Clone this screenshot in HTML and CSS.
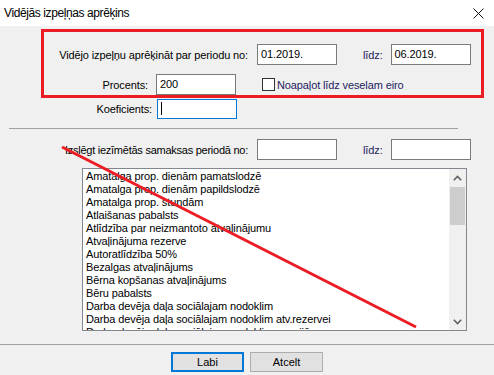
FILE: index.html
```html
<!DOCTYPE html>
<html lang="lv">
<head>
    <meta charset="UTF-8">
    <title>Vidējās izpeļņas aprēķins</title>
    <link rel="stylesheet" href="styles.css">
</head>
<body>
<div class="window">
    <div class="titlebar">
        <span class="title">Vidējās izpeļņas aprēķins</span>
        <svg class="close" width="11" height="11" viewBox="0 0 11 11">
            <path d="M0.5 0.5 L10.5 10.5 M10.5 0.5 L0.5 10.5" stroke="#111" stroke-width="1" fill="none"/>
        </svg>
    </div>

    <div class="content">
        <div class="row row-period">
            <span class="label label-wide">Vidējo izpeļņu aprēķināt par periodu no:</span>
            <div class="field">01.2019.</div>
            <span class="label label-until navy">līdz:</span>
            <div class="field">06.2019.</div>
        </div>

        <div class="row row-percent">
            <span class="label label-percent">Procents:</span>
            <div class="field">200</div>
            <span class="checkbox"></span>
            <span class="label navy">Noapaļot līdz veselam eiro</span>
        </div>

        <div class="row row-coef">
            <span class="label label-coef">Koeficients:</span>
            <div class="field field-focus"><span class="caret"></span></div>
        </div>

        <div class="divider"></div>

        <div class="row row-exclude">
            <span class="label label-wide label-tight">Izslēgt iezīmētās samaksas periodā no:</span>
            <div class="field"></div>
            <span class="label label-until navy">līdz:</span>
            <div class="field"></div>
        </div>

        <div class="listbox">
            <div class="items">
                <div>Amatalga prop. dienām pamatslodzē</div>
                <div>Amatalga prop. dienām papildslodzē</div>
                <div>Amatalga prop. stundām</div>
                <div>Atlaišanas pabalsts</div>
                <div>Atlīdzība par neizmantoto atvaļinājumu</div>
                <div>Atvaļinājuma rezerve</div>
                <div>Autoratlīdzība 50%</div>
                <div>Bezalgas atvaļinājums</div>
                <div>Bērna kopšanas atvaļinājums</div>
                <div>Bēru pabalsts</div>
                <div>Darba devēja daļa sociālajam nodoklim</div>
                <div>Darba devēja daļa sociālajam nodoklim atv.rezervei</div>
                <div>Darba devēja daļa sociālajam nodoklim pensijām</div>
            </div>
            <div class="scrollbar">
                <div class="arrow">
                    <svg width="9" height="6" viewBox="0 0 9 6"><path d="M0.8 5.2 L4.5 1.5 L8.2 5.2" stroke="#606060" stroke-width="1.6" fill="none"/></svg>
                </div>
                <div class="thumb"></div>
                <div class="track"></div>
                <div class="arrow">
                    <svg width="9" height="6" viewBox="0 0 9 6"><path d="M0.8 0.8 L4.5 4.5 L8.2 0.8" stroke="#606060" stroke-width="1.6" fill="none"/></svg>
                </div>
            </div>
        </div>
    </div>

    <div class="footer">
        <button class="btn btn-default">Labi</button>
        <button class="btn">Atcelt</button>
    </div>

    <!-- red annotation drawn over the dialog -->
    <svg class="markup" width="494" height="375" viewBox="0 0 494 375">
        <rect x="42.5" y="30.5" width="440" height="66" fill="none" stroke="#ec1c24" stroke-width="3"/>
        <line x1="62" y1="147" x2="416" y2="327" stroke="#ec1c24" stroke-width="3"/>
    </svg>
</div>
</body>
</html>
```

FILE: styles.css
```css
body {
    margin: 0;
    background: #f0f0f0;
    font-family: 'Liberation Sans', Arial, sans-serif;
    font-size: 11px;
    letter-spacing: -0.12px;
    color: #000;
    overflow: hidden;
}
.window {
    position: relative;
    width: 494px;
    height: 375px;
    background: #f0f0f0;
}
.titlebar {
    height: 26px;
    background: #fff;
    display: flex;
    align-items: center;
    justify-content: space-between;
    padding: 0 10px 0 4px;
}
.title {
    font-size: 12px;
    letter-spacing: -0.4px;
    color: #000;
    margin-top: -1px;
}
.close {
    margin-top: 1px;
}
.content {
    padding-top: 18px;
}
.row {
    display: flex;
    align-items: center;
    height: 21px;
}
.row-percent {
    margin-top: 9px;
}
.row-coef {
    margin-top: 3px;
}
.row-exclude {
    margin-top: 10px;
}
.label {
    white-space: nowrap;
}
.navy {
    color: #1c1c5e;
}
.label-wide {
    width: 248px;
    text-align: right;
    margin-right: 9px;
}
.label-tight {
    letter-spacing: -0.25px;
}
.label-until {
    margin-left: 26px;
    margin-right: 8px;
}
.label-percent {
    width: 148px;
    text-align: right;
    margin-right: 8px;
}
.label-coef {
    width: 152px;
    text-align: right;
    margin-right: 5px;
}
.field {
    box-sizing: border-box;
    width: 80px;
    height: 21px;
    background: #fff;
    border: 1px solid #7a7a7a;
    padding: 0 3px;
    line-height: 19px;
    font-size: 11px;
    display: flex;
    align-items: center;
}
.field-focus {
    border-color: #0078d7;
    height: 20px;
}
.caret {
    width: 1px;
    height: 13px;
    background: #000;
}
.checkbox {
    box-sizing: border-box;
    width: 13px;
    height: 13px;
    border: 1px solid #333;
    background: #fff;
    margin-left: 26px;
    margin-right: 2px;
}
.divider {
    margin: 9px 36px 10px 9px;
    height: 1px;
    background: #a0a0a0;
}
.listbox {
    box-sizing: border-box;
    margin: 8px 0 0 82px;
    width: 385px;
    height: 163px;
    border: 1px solid #828790;
    background: #fff;
    display: flex;
}
.items {
    flex: 1;
    overflow: hidden;
    padding: 1px 0 0 3px;
    line-height: 13px;
    white-space: nowrap;
}
.scrollbar {
    width: 17px;
    background: #f0f0f0;
    display: flex;
    flex-direction: column;
}
.arrow {
    height: 17px;
    display: flex;
    align-items: center;
    justify-content: center;
}
.thumb {
    height: 38px;
    margin: 1px 1px 0;
    background: #cdcdcd;
}
.track {
    flex: 1;
}
.footer {
    margin-top: 13px;
    border-top: 1px solid #a0a0a0;
    display: flex;
    justify-content: center;
    gap: 6px;
    padding: 7px 0 0 0;
}
.btn {
    box-sizing: border-box;
    width: 73px;
    height: 20px;
    background: #e1e1e1;
    border: 1px solid #adadad;
    font-family: 'Liberation Sans', Arial, sans-serif;
    font-size: 11px;
    color: #000;
    padding: 0;
}
.btn-default {
    border: 2px solid #0078d7;
}
.markup {
    position: absolute;
    left: 0;
    top: 0;
    pointer-events: none;
}
```
